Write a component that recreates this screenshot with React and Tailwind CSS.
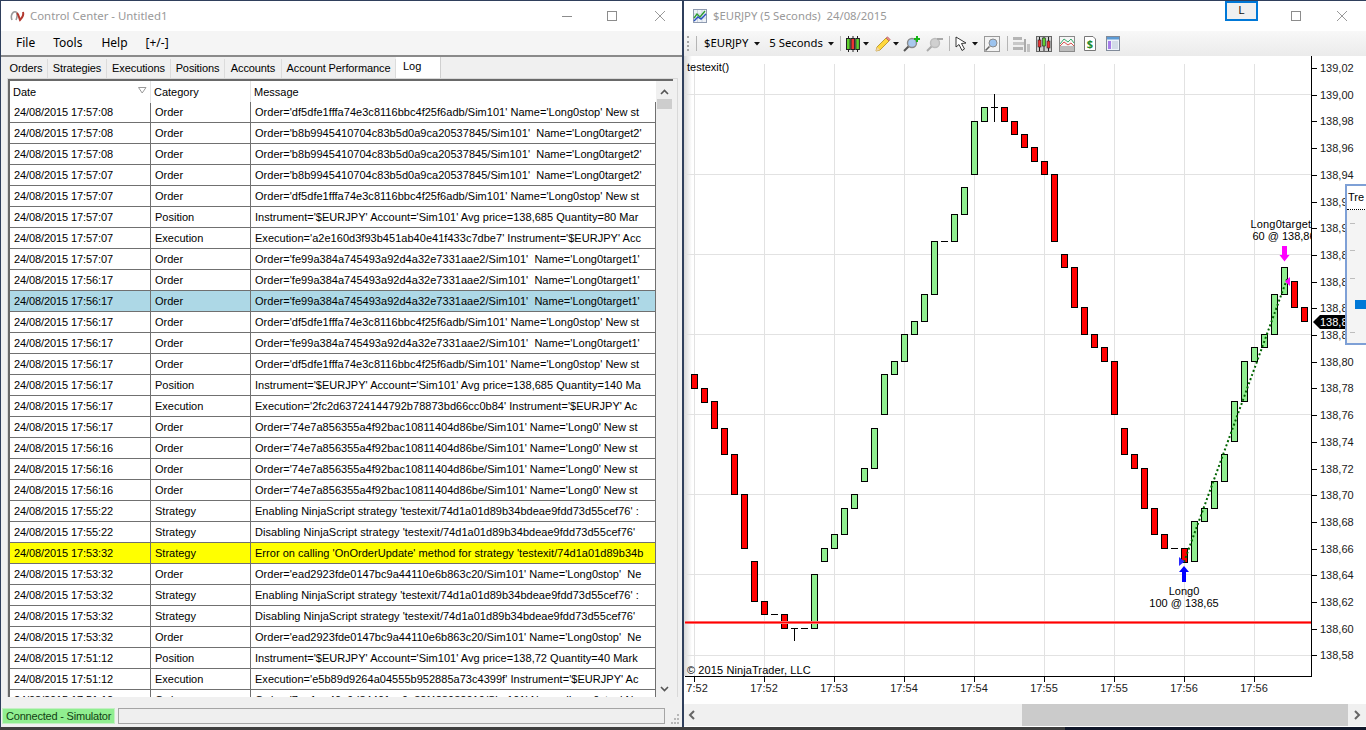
import React from 'react';

const DF5 = "Order='df5dfe1fffa74e3c8116bbc4f25f6adb/Sim101' Name='Long0stop' New st";
const B8B = "Order='b8b9945410704c83b5d0a9ca20537845/Sim101'  Name='Long0target2'";
const FE9 = "Order='fe99a384a745493a92d4a32e7331aae2/Sim101'  Name='Long0target1'";
const E74 = "Order='74e7a856355a4f92bac10811404d86be/Sim101' Name='Long0' New st";
const EAD = "Order='ead2923fde0147bc9a44110e6b863c20/Sim101' Name='Long0stop'  Ne";
const ENA = "Enabling NinjaScript strategy 'testexit/74d1a01d89b34bdeae9fdd73d55cef76' :";
const DIS = "Disabling NinjaScript strategy 'testexit/74d1a01d89b34bdeae9fdd73d55cef76'";

const rows = [
  ['17:57:08', 'Order', DF5],
  ['17:57:08', 'Order', B8B],
  ['17:57:08', 'Order', B8B],
  ['17:57:07', 'Order', B8B],
  ['17:57:07', 'Order', DF5],
  ['17:57:07', 'Position', "Instrument='$EURJPY' Account='Sim101' Avg price=138,685 Quantity=80 Mar"],
  ['17:57:07', 'Execution', "Execution='a2e160d3f93b451ab40e41f433c7dbe7' Instrument='$EURJPY' Acc"],
  ['17:57:07', 'Order', FE9],
  ['17:56:17', 'Order', FE9],
  ['17:56:17', 'Order', FE9, 'selected'],
  ['17:56:17', 'Order', DF5],
  ['17:56:17', 'Order', FE9],
  ['17:56:17', 'Order', DF5],
  ['17:56:17', 'Position', "Instrument='$EURJPY' Account='Sim101' Avg price=138,685 Quantity=140 Ma"],
  ['17:56:17', 'Execution', "Execution='2fc2d63724144792b78873bd66cc0b84' Instrument='$EURJPY' Ac"],
  ['17:56:17', 'Order', E74],
  ['17:56:16', 'Order', E74],
  ['17:56:16', 'Order', E74],
  ['17:56:16', 'Order', E74],
  ['17:55:22', 'Strategy', ENA],
  ['17:55:22', 'Strategy', DIS],
  ['17:53:32', 'Strategy', "Error on calling 'OnOrderUpdate' method for strategy 'testexit/74d1a01d89b34b", 'error'],
  ['17:53:32', 'Order', EAD],
  ['17:53:32', 'Strategy', ENA],
  ['17:53:32', 'Strategy', DIS],
  ['17:53:32', 'Order', EAD],
  ['17:51:12', 'Position', "Instrument='$EURJPY' Account='Sim101' Avg price=138,72 Quantity=40 Mark"],
  ['17:51:12', 'Execution', "Execution='e5b89d9264a04555b952885a73c4399f' Instrument='$EURJPY' Ac"],
  ['17:51:12', 'Order', "Order='7ee1ee40a9d84401ac9e32f428932019/Sim101' Name='Long0stop' New st"],
];

const tabs = [
  ['Orders', 'w-[43px]'],
  ['Strategies', 'w-[59px]'],
  ['Executions', 'w-[64px]'],
  ['Positions', 'w-[54px]'],
  ['Accounts', 'w-[57px]'],
  ['Account Performance', 'w-[114px]'],
];

// x, top, bottom
const redBars = [
  [694, 374, 388], [704, 388, 402], [714, 401, 428], [724, 428, 454], [734, 454, 494],
  [744, 494, 548], [754, 561, 601], [764, 601, 614], [784, 614, 628],
  [1004, 107, 121], [1014, 121, 134], [1024, 134, 147], [1034, 147, 161], [1044, 161, 174],
  [1054, 174, 241], [1064, 254, 267], [1074, 267, 307], [1084, 307, 334], [1094, 334, 347],
  [1104, 347, 361], [1114, 361, 414], [1124, 428, 454], [1134, 454, 468], [1144, 468, 508],
  [1154, 508, 534], [1164, 534, 548], [1184, 548, 562], [1294, 281, 307], [1304, 307, 321],
];
const greenBars = [
  [814, 574, 628], [824, 548, 561], [834, 534, 548], [844, 508, 534], [854, 494, 508],
  [864, 468, 481], [874, 428, 468], [884, 374, 414], [894, 361, 374], [904, 334, 361],
  [914, 321, 334], [924, 294, 321], [934, 241, 294], [954, 214, 241], [964, 187, 214],
  [974, 121, 174], [984, 107, 121], [1194, 521, 561], [1204, 508, 521], [1214, 481, 508],
  [1224, 454, 481], [1234, 401, 441], [1244, 361, 401], [1254, 347, 361], [1264, 334, 347],
  [1274, 294, 334], [1284, 267, 294],
];
const dojis = [[774, 614], [794, 628], [804, 628], [944, 241], [994, 107], [1174, 548]];

const gridX = [694, 764, 834, 904, 974, 1044, 1114, 1184, 1254];
const gridY = [94, 174, 254, 334, 414, 494, 574, 655];
const timeLabels = ['17:52', '17:52', '17:53', '17:54', '17:54', '17:55', '17:55', '17:56', '17:56'];
const prices = Array.from({ length: 23 }, (_, i) => (139.02 - i * 0.02).toFixed(2).replace('.', ','));

const WindowButtons = ({ maxClass, closeClass }) => (
  <>
    <div className={`border border-[#8c8c8c] w-[10px] h-[10px] ${maxClass}`} />
    <svg width="12" height="12" viewBox="0 0 12 12" className={closeClass}>
      <path d="M1 1 L11 11 M11 1 L1 11" stroke="#999" strokeWidth="1" fill="none" />
    </svg>
  </>
);

const Caret = ({ className = '' }) => (
  <svg width="6" height="4" viewBox="0 0 6 4" className={className}>
    <path d="M0 0 H6 L3 3.5 Z" fill="#111" />
  </svg>
);

const Separator = ({ className = '' }) => <div className={`w-px h-[15px] bg-[#b5b5b5] ${className}`} />;

const NinjaLogo = () => (
  <svg width="16" height="12" viewBox="0 0 16 12">
    <path d="M2 10 C0 5 3 1 6 2 C8 3 7 8 6 10" stroke="#9a9a9a" strokeWidth="1.6" fill="none" />
    <path d="M7 3 C9 5 9 8 10 10 C12 8 14 5 13 2" stroke="#b3392f" strokeWidth="2" fill="none" />
  </svg>
);

const ChartIcon = () => (
  <svg width="14" height="14" viewBox="0 0 14 14">
    <rect x="0.5" y="0.5" width="13" height="13" fill="#eef2f7" stroke="#8f9bb0" />
    <path d="M4.5 1 V13 M9 1 V13 M1 5 H13 M1 9 H13" stroke="#cbd3df" />
    <path d="M1 9 L4 5 L7 8 L12 2" stroke="#2f9e2f" strokeWidth="1.4" fill="none" />
    <path d="M1 12 L5 8 L8 10 L13 5" stroke="#2a52be" strokeWidth="1.4" fill="none" />
  </svg>
);

const CandlesIcon = () => (
  <svg width="14" height="16" viewBox="0 0 14 16">
    <path d="M2.5 0 V16 M7 0 V16 M11.5 0 V16" stroke="#222" />
    <rect x="0.5" y="2.5" width="3.6" height="11" fill="#5fd12f" stroke="#222" />
    <rect x="5" y="2.5" width="3.6" height="11" fill="#e33" stroke="#222" />
    <rect x="9.8" y="2.5" width="3.6" height="11" fill="#5fd12f" stroke="#222" />
  </svg>
);

const PencilIcon = () => (
  <svg width="16" height="16" viewBox="0 0 16 16">
    <path d="M1 15 L2 11 L11 2 L14 5 L5 14 Z" fill="#ffd83d" stroke="#b08a1a" strokeWidth="0.8" />
    <path d="M11 2 L12.5 0.8 L15.2 3.5 L14 5 Z" fill="#e98b8b" stroke="#a55" strokeWidth="0.6" />
    <path d="M1 15 L2 11 L5 14 Z" fill="#f2d5a8" />
  </svg>
);

const ZoomIcon = ({ plus }) => (
  <svg width="18" height="16" viewBox="0 0 18 16">
    <path d="M1 15 L6 10" stroke={plus ? '#555' : '#aaa'} strokeWidth="2" />
    <circle cx="9" cy="7" r="4.5" fill={plus ? '#a9c9ee' : '#d0d0d0'} stroke={plus ? '#8a8a8a' : '#bdbdbd'} strokeWidth="1.4" />
    {plus
      ? <path d="M14 0 V6 M11 3 H17" stroke="#17b417" strokeWidth="2" />
      : <path d="M11 3 H17" stroke="#a8a8a8" strokeWidth="2" />}
  </svg>
);

const CursorIcon = () => (
  <svg width="13" height="16" viewBox="0 0 13 16">
    <path d="M1 1 L1 11 L4 8.5 L7 14.5 L9.5 13 L6.5 7.5 L11 7 Z" fill="#fff" stroke="#222" strokeWidth="0.9" />
  </svg>
);

const FramedZoomIcon = () => (
  <svg width="16" height="16" viewBox="0 0 16 16">
    <rect x="0.5" y="0.5" width="15" height="15" fill="#f3f3f3" stroke="#999" />
    <path d="M1.5 14.5 L5.5 10.5" stroke="#666" strokeWidth="1.6" />
    <circle cx="9" cy="7" r="4" fill="#9cc3ee" stroke="#8a8a8a" />
  </svg>
);

const StrategyIcon = () => (
  <svg width="17" height="16" viewBox="0 0 17 16">
    <rect x="0" y="1" width="9" height="3" fill="#b5b5b5" />
    <rect x="0" y="6" width="12" height="3" fill="#c8c8c8" />
    <rect x="0" y="11" width="10" height="3" fill="#b5b5b5" />
    <rect x="11" y="3" width="2" height="13" fill="#ababab" />
    <rect x="14" y="8" width="3" height="8" fill="#c2c2c2" />
  </svg>
);

const CandlesBoxIcon = () => (
  <svg width="16" height="16" viewBox="0 0 16 16">
    <rect x="0.5" y="0.5" width="15" height="15" fill="#d2d2d2" stroke="#666" />
    <path d="M3.5 1 V15 M8 1 V15 M12.5 1 V15" stroke="#222" />
    <rect x="2" y="4" width="3" height="7" fill="#e33" stroke="#222" strokeWidth="0.6" />
    <rect x="6.5" y="2" width="3" height="8" fill="#5fd12f" stroke="#222" strokeWidth="0.6" />
    <rect x="11" y="5" width="3" height="7" fill="#e33" stroke="#222" strokeWidth="0.6" />
  </svg>
);

const LinesBoxIcon = () => (
  <svg width="16" height="16" viewBox="0 0 16 16">
    <rect x="0.5" y="0.5" width="15" height="15" fill="#f6f6f6" stroke="#8a8a8a" />
    <rect x="1" y="10" width="14" height="5" fill="#bdbdbd" />
    <path d="M1 8 L5 3 L9 6 L12 3 L15 7" stroke="#3aa86b" fill="none" />
    <path d="M1 10 L5 6 L9 9 L12 7 L15 10" stroke="#d9534f" fill="none" />
  </svg>
);

const DollarIcon = () => (
  <svg width="12" height="15" viewBox="0 0 12 15">
    <path d="M0.5 0.5 H9 L11.5 3 V14.5 H0.5 Z" fill="#fff" stroke="#777" />
    <text x="6" y="12" textAnchor="middle" fontSize="11" fontWeight="700" fill="#1f8a2b">$</text>
  </svg>
);

const TableIcon = () => (
  <svg width="14" height="15" viewBox="0 0 14 15">
    <rect x="0.5" y="0.5" width="13" height="14" fill="#eef3fa" stroke="#808a99" />
    <rect x="1" y="1" width="12" height="2.5" fill="#5d9bd5" />
    <rect x="2" y="5" width="3" height="8" fill="#a67ce8" />
    <path d="M6 6 H12 M6 8 H12 M6 10 H12 M6 12 H12" stroke="#b7c3d4" />
  </svg>
);

const LogRow = ({ row }) => {
  const [time, category, message, state] = row;
  const bg = state === 'selected' ? 'bg-[#add8e6]' : state === 'error' ? 'bg-[#ffff00]' : 'bg-white';
  return (
    <div className={`grid grid-cols-[141px_100px_1fr] h-[21px] border-b border-[#707070] ${bg}`}>
      <div className="pl-1 border-r border-[#707070] leading-[20px] whitespace-nowrap overflow-hidden tracking-[-0.1px]">24/08/2015 {time}</div>
      <div className="pl-1 border-r border-[#707070] leading-[20px]">{category}</div>
      <div className="pl-1 border-r border-[#707070] leading-[20px] whitespace-pre overflow-hidden tracking-[0.03px]">{message}</div>
    </div>
  );
};

const ControlCenter = () => (
  <div className="w-[682px] flex flex-col border-l border-[#2f3f5c] bg-[#f0f0f0]">
    <div className="h-[30px] bg-white flex items-center shrink-0">
      <div className="ml-[9px]"><NinjaLogo /></div>
      <span className="ml-[4px] text-[11.4px] text-[#999] font-['Noto_Sans',sans-serif]">Control Center - Untitled1</span>
      <div className="w-[10px] h-px bg-[#8c8c8c] ml-auto mr-[35px]" />
      <WindowButtons maxClass="mr-[37px]" closeClass="mr-[16px]" />
    </div>
    <div className="h-[24px] bg-[#f5f5f5] flex items-center text-[12px] text-black shrink-0 pl-[15px] font-['Noto_Sans',sans-serif]">
      <span>File</span>
      <span className="ml-[18px]">Tools</span>
      <span className="ml-[19px]">Help</span>
      <span className="ml-[18px]">[+/-]</span>
    </div>
    <div className="h-[2px] bg-[#8a8a8a] shrink-0" />
    <div className="flex h-[21px] pl-[4px] items-end shrink-0 pt-px">
      {tabs.map(([name, width]) => (
        <div key={name} className={`${width} h-[19px] border-r border-[#dcdcdc] text-center leading-[19px] whitespace-nowrap tracking-[-0.1px]`}>{name}</div>
      ))}
      <div className="w-[45px] h-[21px] bg-white border-r border-[#d0d0d0] pl-[7px] leading-[19px]">Log</div>
    </div>
    <div className="ml-[6px] w-[671px] border-t border-x border-[#d9d9d9] pr-[4px] shrink-0">
      <div className="h-[618px] border-t-2 border-l-2 border-[#696969] flex overflow-hidden">
        <div className="w-[646px] h-full overflow-hidden">
          <div className="grid grid-cols-[141px_100px_1fr] h-[21px] bg-white leading-[22px]">
            <div className="pl-[3px] border-r border-[#e3e3e3] relative">
              Date
              <svg width="9" height="7" viewBox="0 0 9 7" className="absolute right-[3px] top-[6px]">
                <path d="M0.5 0.5 H8 L4.2 6 Z" fill="none" stroke="#999" />
              </svg>
            </div>
            <div className="pl-[3px] border-r border-[#e3e3e3]">Category</div>
            <div className="pl-[3px]">Message</div>
          </div>
          {rows.map((row, i) => <LogRow key={i} row={row} />)}
        </div>
        <div className="w-[17px] bg-[#f0f0f0] flex flex-col items-center">
          <svg width="9" height="6" viewBox="0 0 9 6" className="mt-[8px]">
            <path d="M1 5 L4.5 1.5 L8 5" stroke="#555" strokeWidth="1.6" fill="none" />
          </svg>
          <div className="w-[15px] h-[10px] bg-[#cdcdcd] mt-[4px]" />
          <svg width="9" height="6" viewBox="0 0 9 6" className="mt-auto mb-[5px]">
            <path d="M1 1 L4.5 4.5 L8 1" stroke="#555" strokeWidth="1.6" fill="none" />
          </svg>
        </div>
      </div>
    </div>
    <div className="flex-1 flex items-end pb-[3px] pl-[1px]">
      <div className="w-[113px] h-[16px] bg-[#90ee90] border border-[#c4efc4] leading-[14px] pl-[3px] text-[#123f12] whitespace-nowrap tracking-[-0.2px]">Connected - Simulator</div>
      <div className="w-[547px] h-[16px] ml-[3px] border border-[#a5a5a5] bg-[#efefef]" />
      <svg width="12" height="12" viewBox="0 0 12 12" className="ml-[3px]">
        <path d="M9 2 h2 v2 h-2 z M6 6 h2 v2 h-2 z M9 6 h2 v2 h-2 z M3 10 h2 v2 h-2 z M6 10 h2 v2 h-2 z M9 10 h2 v2 h-2 z" fill="#b8b8b8" />
      </svg>
    </div>
  </div>
);

const Toolbar = () => (
  <div className="h-[25px] bg-gradient-to-b from-[#f8f8f8] to-[#ebebeb] flex items-center text-[11.3px] text-black shrink-0 font-['Noto_Sans',sans-serif]">
    <div className="ml-[3px] w-[2px] h-[15px] border-l-2 border-dotted border-[#a5a5a5]" />
    <Separator className="ml-[7px]" />
    <span className="ml-[7px]">$EURJPY</span>
    <Caret className="ml-[6px]" />
    <span className="ml-[9px]">5 Seconds</span>
    <Caret className="ml-[5px]" />
    <Separator className="ml-[6px]" />
    <div className="ml-[5px]"><CandlesIcon /></div>
    <Caret className="ml-[3px]" />
    <div className="ml-[6px]"><PencilIcon /></div>
    <Caret className="ml-[2px]" />
    <div className="ml-[4px]"><ZoomIcon plus /></div>
    <div className="ml-[5px]"><ZoomIcon /></div>
    <Separator className="ml-[5px]" />
    <div className="ml-[5px]"><CursorIcon /></div>
    <Caret className="ml-[4px]" />
    <div className="ml-[6px]"><FramedZoomIcon /></div>
    <Separator className="ml-[7px]" />
    <div className="ml-[5px]"><StrategyIcon /></div>
    <div className="ml-[6px]"><CandlesBoxIcon /></div>
    <div className="ml-[7px]"><LinesBoxIcon /></div>
    <div className="ml-[9px]"><DollarIcon /></div>
    <div className="ml-[10px]"><TableIcon /></div>
  </div>
);

const Chart = () => (
  <svg width="682" height="648" viewBox="684 56 682 648" className="block text-[11px]">
    <defs>
      <linearGradient id="edge" x1="0" x2="1" y1="0" y2="0">
        <stop offset="0" stopColor="#d8d8d8" />
        <stop offset="1" stopColor="#ffffff" />
      </linearGradient>
      <clipPath id="plot"><rect x="685" y="56" width="626" height="620" /></clipPath>
      <clipPath id="axisLabels"><rect x="686" y="676" width="640" height="28" /></clipPath>
    </defs>
    <rect x="684" y="56" width="8" height="620" fill="url(#edge)" />
    {gridX.map(x => <line key={x} x1={x + 0.5} x2={x + 0.5} y1="64" y2="676" stroke="#e2e2e2" />)}
    {gridY.map(y => <line key={y} x1="685" x2="1311" y1={y + 0.5} y2={y + 0.5} stroke="#e2e2e2" />)}

    <text x="687" y="71" fill="#000">testexit()</text>

    {redBars.map(([x, t, b]) => (
      <rect key={x} x={x - 2.5} y={t + 0.5} width="6" height={b - t} fill="#ff0000" stroke="#000" />
    ))}
    {greenBars.map(([x, t, b]) => (
      <rect key={x} x={x - 2.5} y={t + 0.5} width="6" height={b - t} fill="#90ee90" stroke="#000" />
    ))}
    {dojis.map(([x, y]) => <line key={x} x1={x - 3} x2={x + 4} y1={y + 0.5} y2={y + 0.5} stroke="#000" />)}
    <line x1="794.5" x2="794.5" y1="628" y2="641" stroke="#000" />
    <line x1="994.5" x2="994.5" y1="94" y2="122" stroke="#000" />

    <line x1="685" x2="1311" y1="622.5" y2="622.5" stroke="#ff8a8a" strokeWidth="3" />
    <line x1="685" x2="1311" y1="622.5" y2="622.5" stroke="#ff0000" strokeWidth="1.6" />

    <line x1="1184" y1="562" x2="1287" y2="279" stroke="#006400" strokeWidth="2" strokeDasharray="2 2.4" />

    <path d="M1179 557 L1184.5 561.5 L1179 566 Z" fill="#2b2bff" />
    <path d="M1184 566 L1189 572 L1186 572 L1186 582 L1182 582 L1182 572 L1179 572 Z" fill="#0000ff" />
    <text x="1184" y="595" textAnchor="middle" fill="#000">Long0</text>
    <text x="1184" y="607" textAnchor="middle" fill="#000">100 @ 138,65</text>

    <path d="M1285 281.5 L1290 277 L1290 286 Z" fill="#ff00ff" />
    <path d="M1282 246 H1287 V255 H1289.5 L1284.5 261.5 L1279.5 255 H1282 Z" fill="#ff00ff" />
    <g clipPath="url(#plot)">
      <text x="1284" y="228" textAnchor="middle" fill="#000" letterSpacing="0.2">Long0target1</text>
      <text x="1284" y="240" textAnchor="middle" fill="#000">60 @ 138,86</text>
    </g>

    <text x="687" y="674" fill="#000" letterSpacing="0.1">© 2015 NinjaTrader, LLC</text>

    <line x1="1311.5" x2="1311.5" y1="56" y2="677" stroke="#000" />
    <line x1="685" x2="1312" y1="676.5" y2="676.5" stroke="#000" />
    {prices.map((p, i) => {
      const y = Math.round(68 + i * 26.7);
      return (
        <g key={i}>
          <line x1="1311" x2="1317" y1={y + 0.5} y2={y + 0.5} stroke="#000" />
          <text x="1320" y={y + 4} fill="#1a1a1a">{p}</text>
        </g>
      );
    })}
    <path d="M1313 322 L1320 315 H1346 V329 H1320 Z" fill="#000" />
    <text x="1320" y="326" fill="#fff">138,82</text>

    <g clipPath="url(#axisLabels)">
      {gridX.map((x, i) => (
        <g key={x}>
          <line x1={x + 0.5} x2={x + 0.5} y1="677" y2="682" stroke="#000" />
          <text x={x} y="692" textAnchor="middle" fill="#1a1a1a">{timeLabels[i]}</text>
        </g>
      ))}
    </g>
  </svg>
);

const ChartWindow = () => (
  <div className="flex-1 ml-[2px] flex flex-col bg-white relative overflow-hidden">
    <div className="h-[30px] flex items-center shrink-0">
      <div className="ml-[9px]"><ChartIcon /></div>
      <span className="ml-[6px] text-[11.3px] text-[#999] font-['Noto_Sans',sans-serif] whitespace-pre">$EURJPY (5 Seconds)  24/08/2015</span>
      <div className="ml-auto mr-[33px] self-start w-[33px] h-[20px] border-2 border-[#0078d7] bg-[#f0f0f0] text-center text-[11px] leading-[15px] text-[#111]">L</div>
      <WindowButtons maxClass="mr-[35px]" closeClass="mr-[18px]" />
    </div>
    <Toolbar />
    <div className="flex-1 relative">
      <Chart />
      <div className="absolute left-[661px] top-[128px] w-[24px] h-[161px] border-2 border-[#7ea0d6] bg-[#f4f4f4] overflow-hidden">
        <div className="h-[24px] border-b border-dotted border-black pl-[1px] leading-[22px] bg-white">Tre</div>
        <div className="h-[13px]" />
        <div className="w-[5px] h-px bg-[#bdbdbd] ml-[3px]" />
        <div className="h-[26px]" />
        <div className="w-[5px] h-px bg-[#bdbdbd] ml-[3px]" />
        <div className="h-[27px]" />
        <div className="w-[5px] h-px bg-[#bdbdbd] ml-[3px]" />
        <div className="h-[21px]" />
        <div className="w-[14px] h-[9px] bg-[#0078d7] ml-[8px]" />
        <div className="h-[23px]" />
        <div className="w-[5px] h-px bg-[#bdbdbd] ml-[3px]" />
      </div>
    </div>
    <div className="h-[22px] bg-[#f0f0f0] flex items-center shrink-0 mb-px">
      <svg width="17" height="12" viewBox="0 0 17 12" className="shrink-0">
        <path d="M10 2 L6 6 L10 10" stroke="#666" strokeWidth="2" fill="none" />
      </svg>
      <div className="w-[326px] h-full bg-[#cbcbcb] ml-auto" />
      <svg width="18" height="12" viewBox="0 0 18 12" className="shrink-0">
        <path d="M7 2 L11 6 L7 10" stroke="#666" strokeWidth="2" fill="none" />
      </svg>
    </div>
  </div>
);

export default function App() {
  return (
    <div className="w-[1366px] h-[730px] flex flex-col bg-[#2f3f5c] overflow-hidden font-['Liberation_Sans',Arial,sans-serif] text-[11px] text-black">
      <div className="h-px shrink-0" />
      <div className="flex-1 flex min-h-0">
        <ControlCenter />
        <ChartWindow />
      </div>
      <div className="h-[3px] flex shrink-0">
        <div className="w-[1065px] bg-[#3f3f3f]" />
        <div className="flex-1 bg-[#11182a]" />
      </div>
    </div>
  );
}
